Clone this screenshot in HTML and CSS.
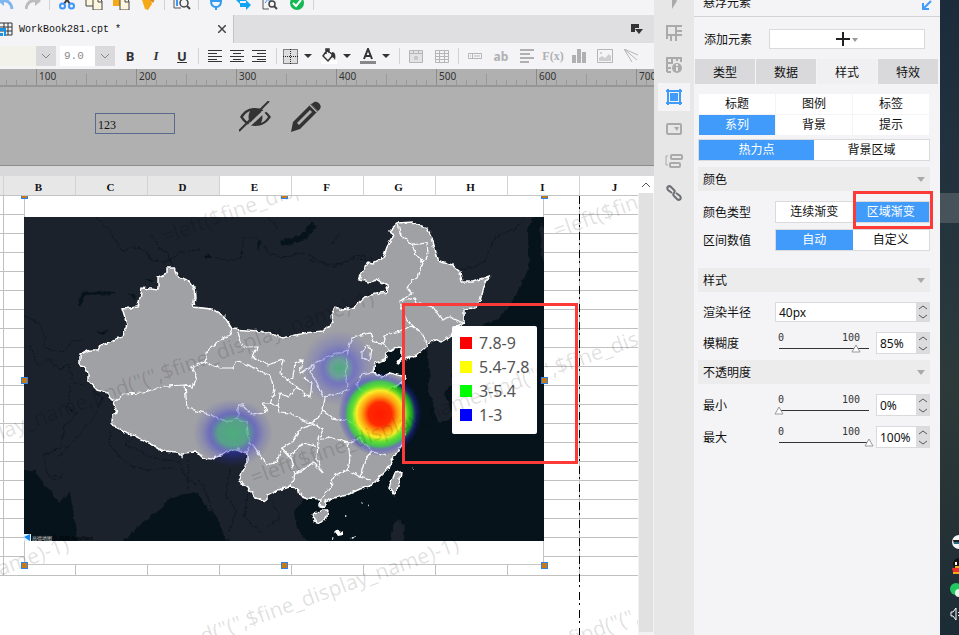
FILE: index.html
```html
<!DOCTYPE html>
<html lang="zh-CN">
<head>
  <meta charset="UTF-8" />
  <meta name="viewport" content="width=device-width, initial-scale=1.0"/>
  <title>WorkBook281.cpt</title>
  <link rel="stylesheet" href="styles.css">
</head>
<body>
  <div class="app">
    <main class="editor">
      <div class="toolbar">
        <button class="tool" aria-label="undo"><svg width="16" height="16"><path d="M14 15C13 8 9 6 4 7" fill="none" stroke="#7fb6f0" stroke-width="3"/><path d="M6 2v10L0 7z" fill="#7fb6f0"/></svg></button>
        <button class="tool" aria-label="redo"><svg width="16" height="16"><path d="M1 15C2 8 6 6 11 7" fill="none" stroke="#bcbcbf" stroke-width="3"/><path d="M10 2v10l6-5z" fill="#bcbcbf"/></svg></button>
        <span class="sep"></span>
        <button class="tool" aria-label="cut"><svg width="16" height="16"><path d="M4 0l7 10M12 0L5 10" stroke="#3a3a3c" stroke-width="2"/><g fill="none" stroke="#3d95f5" stroke-width="2"><circle cx="3.500" cy="12" r="2.500"/><circle cx="12.500" cy="12" r="2.500"/></g></svg></button>
        <button class="tool" aria-label="copy"><svg width="18" height="16"><path d="M1 0h9v12H1z" fill="#fdf6de" stroke="#444"/><path d="M8 4h6l3 3v9H8z" fill="#fdf6de" stroke="#444"/><path d="M13 4v4h4" fill="none" stroke="#444"/></svg></button>
        <button class="tool" aria-label="paste"><svg width="18" height="16"><path d="M1 0h11v12H1z" fill="#f5a916"/><path d="M8 4h6l3 3v9H8z" fill="#fdf6de" stroke="#444"/><path d="M13 4v4h4" fill="none" stroke="#444"/></svg></button>
        <button class="tool" aria-label="format painter"><svg width="16" height="16"><path d="M2 6l9 0 1 4-4 6-3-1z" fill="#f5a916"/><path d="M10 6l4-5 1 4-2 4z" fill="#d98b1c"/></svg></button>
        <span class="sep"></span>
        <button class="tool" aria-label="preview"><svg width="18" height="16"><path d="M8 14H1V0h12v5" fill="none" stroke="#555"/><path d="M4 3v9" stroke="#3d95f5" stroke-width="2"/><circle cx="11" cy="9" r="4" fill="#f4f4f7" stroke="#444" stroke-width="1.500"/><path d="M14 12l3 3" stroke="#444" stroke-width="2"/></svg></button>
        <span class="sep"></span>
        <button class="tool" aria-label="connect"><svg width="16" height="16"><path d="M2 7h12M3 7c0 4 2 6 5 6s5-2 5-6" fill="none" stroke="#2f9cf0" stroke-width="2"/><path d="M8 13v3" stroke="#2f9cf0" stroke-width="2"/></svg></button>
        <button class="tool" aria-label="switch"><svg width="16" height="16"><path d="M0 5l5-4v3h6v3H5v3zM16 11l-5-5v3H5v4h6v3z" fill="#12a5f4"/></svg></button>
        <button class="tool" aria-label="check template"><svg width="18" height="16"><path d="M8 15H2V0h12v6" fill="none" stroke="#555"/><path d="M4 9l3-4 2 3 3-6" fill="none" stroke="#3d95f5"/><circle cx="11" cy="10" r="3" fill="#f4f4f7" stroke="#444" stroke-width="1.500"/><path d="M13 12l3 3" stroke="#444" stroke-width="2"/></svg></button>
        <button class="tool" aria-label="done"><svg width="14" height="16"><circle cx="7" cy="9" r="7" fill="#12b954"/><path d="M3 9l3 3 5-6" fill="none" stroke="#fff" stroke-width="2"/></svg></button>
        <span class="sep"></span>
      </div>

      <div class="tabbar">
        <div class="file-tab">
          <svg width="13" height="14"><path d="M0 1h12v12H6M0 5h12M0 9h12M4 1v8M8 1v12" fill="none" stroke="#333"/><path d="M0 6h6v8H4V9H0zM0 11h3v3H0z" fill="#1a90e0"/></svg>
          <span class="file-name">WorkBook281.cpt *</span>
          <button class="close-btn" aria-label="close"><svg width="8" height="8"><path d="M0 0l8 8M8 0L0 8" stroke="#444" stroke-width="1.500"/></svg></button>
        </div>
        <button class="window-btn" aria-label="windows"><svg width="12" height="11"><path d="M0 0h8v4H4v4H0z" fill="#333"/><path d="M4 5h8l-4 5z" fill="#333"/></svg></button>
      </div>

      <div class="formatbar">
        <div class="combos">
          <select class="combo font-combo" aria-label="font"><option></option></select>
          <select class="combo size-combo" aria-label="font size"><option>9.0</option></select>
        </div>
        <button class="fmt bold">B</button>
        <button class="fmt italic">I</button>
        <button class="fmt underline">U</button>
        <span class="sep"></span>
        <div class="align-group">
          <button class="fmt narrow" aria-label="align left"><svg width="14" height="12"><path d="M0 .5h14M0 3.500h9M0 6.500h14M0 9.500h9M0 11.500h14" stroke="#333"/></svg></button>
          <button class="fmt narrow" aria-label="align center"><svg width="14" height="12"><path d="M0 .5h14M3 3.500h8M0 6.500h14M3 9.500h8M0 11.500h14" stroke="#333"/></svg></button>
          <button class="fmt narrow" aria-label="align right"><svg width="14" height="12"><path d="M0 .5h14M5 3.500h9M0 6.500h14M5 9.500h9M0 11.500h14" stroke="#333"/></svg></button>
        </div>
        <span class="sep"></span>
        <div class="drop-group">
          <button class="fmt drop" aria-label="borders"><svg width="15" height="15"><path fill="#ddd" d="M0 0h15v15H0z"/><path d="M.5 .5h14v14H.5zM7.500 0v15M0 7.500h15" fill="none" stroke="#222" stroke-dasharray="1 1"/></svg><i class="caret"></i></button>
          <button class="fmt drop" aria-label="fill colour"><svg width="16" height="16"><path fill="#fff" d="M0 12h16v4H0z"/><path d="M6 2l6 5-5 6-5-5zM5 6V1h3v4" fill="none" stroke="#333" stroke-width="1.500"/><path d="M11 4c3 0 4 3 3 8-1-2-2-3-4-3z" fill="#333"/></svg><i class="caret"></i></button>
          <button class="fmt drop" aria-label="text colour"><svg width="16" height="16"><path fill="#888" d="M0 13h16v3H0z"/><path d="M4 11L8 1l4 10M5 8h6" fill="none" stroke="#333" stroke-width="2"/></svg><i class="caret"></i></button>
        </div>
        <span class="sep"></span>
        <button class="fmt off" aria-label="merge"><svg width="14" height="13"><path d="M.5 .5h13v12H.5zM0 3.500h14M4.500 0v3M9.500 0v3" fill="#e3e3e5" stroke="#b5b5b7"/><path d="M5 6h4v4H5z" fill="#c8c8ca"/></svg></button>
        <button class="fmt off" aria-label="split"><svg width="14" height="13"><path d="M.5 .5h13v12H.5zM0 3.500h14M0 6.500h14M0 9.500h14M4.500 0v13M9.500 0v13" fill="none" stroke="#b5b5b7"/></svg></button>
        <span class="sep"></span>
        <button class="fmt off" aria-label="widget"><svg width="14" height="6"><path d="M.5 .5h13v5H.5zM4.500 0v6M6 3h6M2 3h1" fill="none" stroke="#b5b5b7"/></svg></button>
        <button class="fmt off">ab</button>
        <button class="fmt off" aria-label="rich text"><svg width="14" height="14"><path d="M0 1h14M0 5h10M0 9h14M0 13h9" stroke="#b0b0b2" stroke-width="2"/></svg></button>
        <button class="fmt off formula">F(x)</button>
        <button class="fmt off" aria-label="chart"><svg width="14" height="14"><path d="M0 6h4v8H0zM5 0h4v14H5zM10 3h4v11h-4z" fill="#b0b0b2"/></svg></button>
        <button class="fmt off" aria-label="image"><svg width="16" height="14"><path d="M.5 .5h15v13H.5z" fill="none" stroke="#b5b5b7"/><path d="M2 12V9l3-2 3 2 4-4 2 2v5z" fill="#cfcfd1"/><circle cx="4" cy="4" r="1" fill="#c5c5c7"/></svg></button>
        <button class="fmt off" aria-label="slope line"><svg width="14" height="14"><path d="M0 0l14 6M0 0l8 13M0 0l13 11" fill="none" stroke="#b5b5b7"/></svg></button>
      </div>

      <div class="ruler">
        <span>100</span><span>200</span><span>300</span><span>400</span><span>500</span><span>600</span><span>700</span>
      </div>

      <div class="param-pane">
        <input class="param-input" type="text" value="123" aria-label="parameter">
        <div class="param-actions">
          <svg width="33" height="31" viewBox="0 0 33 31"><path d="M1 16c4-7 9-9 15-9s12 3 16 9c-4 6-9 9-16 9S5 22 1 16z" fill="#333"/><path d="M4 16c2-3 4-5 7-6-2 4-2 8 0 12-3-1-5-3-7-6zM22 10c3 1 5 3 7 6-2 3-4 5-7 6 2-4 2-8 0-12z" fill="#b0b0b0"/><path d="M2 32L33 3" stroke="#b0b0b0" stroke-width="3"/><path d="M0 30L30 0" stroke="#333" stroke-width="2"/></svg>
          <svg width="30" height="31" viewBox="0 0 30 31"><path d="M2 21L20 3l7 7L9 28l-9 3z" fill="#333"/><path d="M6 22L19 9l2 2L8 24z" fill="#b0b0b0"/><path d="M19 4l7 7" stroke="#b0b0b0" stroke-width="1.500"/><path d="M22 2c3-4 10 2 7 6l-2 2-7-7z" fill="#333"/></svg>
        </div>
      </div>

      <div class="workspace">
        <div class="sheet">
          <div class="columns">
            <span class="first"></span><span>B</span><span>C</span><span>D</span><span class="on">E</span><span class="on">F</span><span class="on">G</span><span class="on">H</span><span class="on">I</span><span class="on">J</span>
          </div>
          <div class="canvas">
            <div class="grid"></div>
            <div class="page-edge"></div>
            <div class="float-chart">
              <svg class="map" viewBox="24 217 520 324">
                <defs>
                  <filter id="rough" x="-5%" y="-5%" width="110%" height="110%" color-interpolation-filters="sRGB">
                    <feTurbulence type="fractalNoise" baseFrequency="0.18" numOctaves="2" seed="4"/>
                    <feDisplacementMap in="SourceGraphic" scale="5" xChannelSelector="R" yChannelSelector="G"/>
                  </filter>
                  <radialGradient id="hot">
                    <stop offset="0" stop-color="#ff1a00"/>
                    <stop offset=".28" stop-color="#ff2a00"/>
                    <stop offset=".42" stop-color="#ff9a10"/>
                    <stop offset=".56" stop-color="#fff020" stop-opacity=".95"/>
                    <stop offset=".66" stop-color="#60e820" stop-opacity=".9"/>
                    <stop offset=".77" stop-color="#20d030" stop-opacity=".7"/>
                    <stop offset=".86" stop-color="#3038d0" stop-opacity=".4"/>
                    <stop offset="1" stop-color="#1010c0" stop-opacity="0"/>
                  </radialGradient>
                  <radialGradient id="cool">
                    <stop offset="0" stop-color="#38b070" stop-opacity=".8"/>
                    <stop offset=".22" stop-color="#48a090" stop-opacity=".6"/>
                    <stop offset=".42" stop-color="#4848d8" stop-opacity=".5"/>
                    <stop offset=".65" stop-color="#4848d8" stop-opacity=".25"/>
                    <stop offset="1" stop-color="#4848d8" stop-opacity="0"/>
                  </radialGradient>
                  <radialGradient id="warm">
                    <stop offset="0" stop-color="#38b070" stop-opacity=".8"/>
                    <stop offset=".38" stop-color="#38a080" stop-opacity=".7"/>
                    <stop offset=".58" stop-color="#3838d0" stop-opacity=".5"/>
                    <stop offset=".78" stop-color="#3838d0" stop-opacity=".2"/>
                    <stop offset="1" stop-color="#3838d0" stop-opacity="0"/>
                  </radialGradient>
                </defs>
                <rect x="24" y="217" width="520" height="324" fill="#1b222c"/>
                <g filter="url(#rough)">
                  <g fill="#06131a">
                    <path d="M20 470H34L45 485 60 503 70 492 73 510 78 545H20z"/>
                    <path d="M120 545L145 520 157 513 168 500 180 495 197 492 207 508 218 518 222 533 232 545z"/>
                    <path d="M365 375L384 350 404 344 410 358 427 349 430 372 428 392 435 402 443 395 452 384 452 350 470 332 500 318 516 296 529 268 528 230 535 212H550V545H310L297 528 294 512 305 498 345 480 390 440 378 400z"/>
                    <path d="M280 240l20-4 12-14 5 4-12 14-22 6zM78 300l5-8 16-1 16 1v2l-30 1-4 12zM96 332l13-2-6 5zM129 293l5 1 1 7zM204 256l5-2 2 3-5 2zM257 243l3-2-1 10zM142 276l12 5-3 1z"/>
                  </g>
                  <g fill="#1b222c">
                    <path d="M391 532l6-12 8 5-2 20H390zM432 400l12-6 9 18-3 8-12 2z"/>
                    <path d="M540 222l6 10v38l-5-18z"/>
                  </g>
                  <g fill="none" stroke="#0c141c" stroke-dasharray="2 1">
                    <path d="M96 217l14 15 12 19 14-4 12 6 4 8 14 1 14-9 20-4M150 235l6 5 2 8 10 4 4 12M216 258l12 3 14-4 1-20 13 1 14 16 14 4 20-6 22 12 16 0 14-9 20 4M455 270l18-3 12-6 10-24 20-8 12-14"/>
                    <path d="M24 315l14 8 8 16-3 8 20 6 9-12 12-2M30 345l8 20 12-6 8 10 10-4 6 18 14 3M70 385l-2 24 10 4-14 12-3 22-17 8 3 18 14 5M94 392l8 6-8 20-22 24-16 18M110 432l-1 14 22 20 18 4 24-2M133 437l-8 7 28 14 26 4 8 18 9 4M188 460v30M200 480l8 18 6 20 10 16M230 470l-4 25 10 16-6 20M248 493l-4 24 18 16M272 500l8 18-12 8M46 475l12 6 6-8"/>
                    <path d="M268 217l10 12M310 260l22 7 22-9 20 4M340 232l-8 12M425 497l14-12 20-32M400 510l-8 10"/>
                  </g>
                  <g fill="#a0a1a4" stroke="#fff" stroke-width="1.500">
                    <path d="M167 268L174 268 177 275 182 279 189 281 194 288 195 297 193 307 212 309 224 316 232 329 260 331 268 333 283 338 305 333 323 331 333 323 332 313 335 308 343 310 355 307 367 296 380 293 388 292 387 286 377 280 370 282 359 280 367 262 373 263 383 258 387 247 394 235 389 231 398 223 413 222 417 225 427 228 432 238 438 260 452 265 460 272 462 282 473 282 489 276 484 287 480 302 475 308 464 309 464 323 452 330 450 337 442 342 435 339 427 346 417 355 402 360 397 364 402 356 402 348 397 347 387 353 385 360 375 363 373 372 382 377 390 373 406 377 403 382 393 387 388 392 383 397 393 410 398 417 395 422 406 430 405 435 402 445 393 458 387 470 372 485 360 489 347 495 330 499 325 501 325 507 320 506 321 499 307 498 300 495 298 488 290 487 277 490 267 495 267 501 255 498 248 487 239 481 242 473 247 463 247 453 238 449 227 452 212 459 203 458 197 452 182 453 182 457 177 452 163 451 153 445 133 435 117 429 112 422 113 415 117 413 113 403 108 393 97 390 88 380 88 373 85 367 80 366 80 355 90 350 98 350 100 346 123 336 127 325 123 312 122 309 138 307 142 288 158 290 158 277 167 273z"/>
                    <path d="M313 515L320 510 328 510 327 517 320 523 314 521z"/>
                    <path d="M395 473L401 472 400 480 395 495 389 488z"/>
                  </g>
                  <g fill="none" stroke="#fff" stroke-width="1.200">
                    <path d="M232 329L228 337 220 340 208 349 205 362 192 367 197 377 193 387 185 385 165 386 143 393 123 394 113 403"/>
                    <path d="M185 385L187 408 212 415 227 422 238 418 238 405 243 405 253 415 267 412 262 403 270 403 275 390 270 377 253 367 237 361 233 368 220 368 205 362"/>
                    <path d="M237 330L243 347 257 347 253 357 267 365 283 360 280 373 287 380 297 387 290 397 280 394 278 406 270 403"/>
                    <path d="M238 418L247 423 249 443 247 452M249 443L253 445 267 465 277 462 282 448 290 457 303 443 318 447"/>
                    <path d="M287 380L293 377 295 363 302 360 300 374 313 365 327 357 348 350 352 337 370 333 374 342 383 343 385 335 400 332 412 325 405 317 400 302 415 298 417 303 433 307 442 320 450 317 463 323"/>
                    <path d="M412 325L423 335 427 346M383 343L390 352M348 350L347 362 345 375 348 390 343 392 325 397 323 410 333 418 353 422 360 430M315 363L310 372 317 383 323 397"/>
                    <path d="M398 223L400 233 412 245 417 257 423 262 418 277 407 287 412 293 400 302M412 245L427 243 428 253 423 262"/>
                    <path d="M362 353L367 345 372 350 370 360 362 357zM373 372L362 374 357 383 360 390 383 397M297 387L305 395 310 397 312 383 304 377M278 406L280 412 290 413 305 422 313 423 323 410"/>
                    <path d="M313 423L323 430 318 440 317 460 323 473M318 440L330 437 348 443 360 438 360 430M348 443L350 458 348 470 335 475 331 485 322 498M348 470L360 477 370 480"/>
                    <path d="M360 477L365 460 372 452 387 455M360 438L372 452M360 430L372 427 381 434 395 435M383 397L372 405 360 400 355 412 353 422M372 405L380 420 381 434M313 423L300 430 292 442 282 448M290 457L295 475 290 487M295 475L313 463 323 473"/>
                  </g>
                  <g fill="#fff">
                    <path d="M335 532l3-3 2 4 3-2v4l-5 1zM350 538l5-2-2 4zM361 502l2 1-1 1zM367 504l2 1-1 2zM346 515l2 1-2 1zM413 467l1 2-1 1zM331 536l3 2-2 1z"/>
                  </g>
                </g>
                <circle cx="339" cy="368" r="38" fill="url(#cool)"/>
                <ellipse cx="233" cy="433" rx="40" ry="34" fill="url(#warm)"/>
                <circle cx="380" cy="414" r="42" fill="url(#hot)"/>
                <path d="M24 534h7v7h-7z" fill="#dff2ff"/><path d="M24 537l6-3v7z" fill="#1588f0"/>
                <text class="map-credit light" x="32" y="540">高德地图</text>
                <text class="map-credit" x="53" y="540">© 2020 AutoNavi</text>
              </svg>
              <ul class="legend">
                <li><i class="red"></i>7.8-9</li>
                <li><i class="yellow"></i>5.4-7.8</li>
                <li><i class="green"></i>3-5.4</li>
                <li><i class="blue"></i>1-3</li>
              </ul>
            </div>
            <svg class="watermark" viewBox="0 196 638 439" preserveAspectRatio="xMinYMin slice">
              <text transform="translate(165 244) rotate(-20)">=left($fine_display_name,find("(",$fine_display_name)-1)</text>
              <text transform="translate(557 238) rotate(-20)">=left($fine_display_name,find("(",$fine_display_name)-1)</text>
              <text transform="translate(-140 491) rotate(-20)">=left($fine_display_name,find("(",$fine_display_name)-1)</text>
              <text transform="translate(254 485) rotate(-20)">=left($fine_display_name,find("(",$fine_display_name)-1)</text>
              <text transform="translate(-445 738) rotate(-20)">=left($fine_display_name,find("(",$fine_display_name)-1)</text>
              <text transform="translate(-55 738) rotate(-20)">=left($fine_display_name,find("(",$fine_display_name)-1)</text>
              <text transform="translate(337 732) rotate(-20)">=left($fine_display_name,find("(",$fine_display_name)-1)</text>
            </svg>
            <div class="mark mark-legend"></div>
            <div class="handles">
              <i></i><i></i><i></i>
              <i></i><i class="none"></i><i></i>
              <i></i><i></i><i></i>
            </div>
          </div>
        </div>
        <div class="scrollbar">
          <button class="scroll-up" aria-label="scroll up"><svg width="10" height="6"><path d="M1 5l4-4 4 4" fill="none" stroke="#555"/></svg></button>
          <div class="scroll-track"></div>
        </div>
      </div>
    </main>

    <nav class="rail">
      <button aria-label="collapse"><svg width="16" height="16"><path d="M6 0v16l5-8z" fill="#aaa"/></svg></button>
      <button aria-label="cell element"><svg width="16" height="16"><path d="M1 14V1h9v9H1M5 10v6M10 10v6M10 1h6M10 6h6M10 10h6M15 0v2M15 5v2M15 9v2" fill="none" stroke="#aaa" stroke-width="2"/></svg></button>
      <button aria-label="cell attribute"><svg width="16" height="16"><path d="M1 15V1h14v4M1 6h6M6 1v6M1 11h4M11 1v3M1 15h4" fill="none" stroke="#aaa" stroke-width="2"/><circle cx="11" cy="11" r="5" fill="#aaa"/><path d="M11 7v2M11 10v4" stroke="#e7e7e8" stroke-width="2"/></svg></button>
      <button class="active" aria-label="float element"><svg width="16" height="16"><path d="M2 0v16M14 0v16M0 2h16M0 14h16" stroke="#409bfb" stroke-width="2"/><path d="M4 4h8v8H4z" fill="#409bfb"/></svg></button>
      <button aria-label="widget settings"><svg width="16" height="12"><rect x="1" y="1" width="14" height="10" rx="1" fill="none" stroke="#aaa" stroke-width="2"/><path d="M8 4h5l-2 4z" fill="#aaa"/></svg></button>
      <button aria-label="condition attribute"><svg width="18" height="16"><path d="M3 3H1v9h2" fill="none" stroke="#aaa"/><rect x="6" y="2" width="11" height="4" rx="1" fill="none" stroke="#aaa" stroke-width="2"/><rect x="5" y="10" width="10" height="4" rx="1" fill="none" stroke="#aaa" stroke-width="2"/></svg></button>
      <button aria-label="hyperlink"><svg width="16" height="16" fill="none" stroke="#6d6f75" stroke-width="2"><path d="M6 8L2 5C0 2 3 0 5 2l3 3M8 5c1 1 1 2 0 3M10 8l4 3c2 3-1 5-3 3l-3-3M8 11c-1-1-1-2 0-3"/></svg></button>
    </nav>

    <aside class="panel">
      <header class="panel-title">
        <span>悬浮元素</span>
        <svg width="10" height="10"><path d="M9 1L2 8M1 3v6h6" fill="none" stroke="#409bfb" stroke-width="2"/></svg>
      </header>
      <div class="add-row">
        <span>添加元素</span>
        <button class="add-btn" aria-label="添加元素"><svg width="22" height="14"><path d="M7 0v14M0 7h14" stroke="#222" stroke-width="2"/><path d="M16 6h6l-3 4z" fill="#999"/></svg></button>
      </div>
      <div class="tabs">
        <button>类型</button><button>数据</button><button class="active">样式</button><button>特效</button>
      </div>
      <div class="panel-body">
        <div class="subtabs">
          <button>标题</button><button>图例</button><button>标签</button>
          <button class="active">系列</button><button>背景</button><button>提示</button>
        </div>
        <div class="segmented layer"><button class="active">热力点</button><button>背景区域</button></div>

        <button class="section">颜色<i></i></button>
        <div class="fields color-fields">
          <div class="field">
            <span class="name">颜色类型</span>
            <div class="segmented"><button>连续渐变</button><button class="active">区域渐变</button><div class="mark mark-type"></div></div>
          </div>
          <div class="field">
            <span class="name">区间数值</span>
            <div class="segmented"><button class="active">自动</button><button>自定义</button></div>
          </div>
        </div>

        <button class="section">样式<i></i></button>
        <div class="fields style-fields">
          <div class="field">
            <label class="name" for="radius">渲染半径</label>
            <div class="spinner wide"><input id="radius" type="text" value="40px"><span class="steps"><button aria-label="增加"><svg width="8" height="5"><path d="M0 4l4-3 4 3" fill="none" stroke="#555"/></svg></button><button aria-label="减少"><svg width="8" height="5"><path d="M0 1l4 3 4-3" fill="none" stroke="#555"/></svg></button></span></div>
          </div>
          <div class="field">
            <label class="name" for="blur">模糊度</label>
            <div class="slider"><div class="scale"><span>0</span><span>100</span></div><input id="blur" type="range" value="85"></div>
            <div class="spinner"><input type="text" value="85%" aria-label="模糊度"><span class="steps"><button aria-label="增加"><svg width="8" height="5"><path d="M0 4l4-3 4 3" fill="none" stroke="#555"/></svg></button><button aria-label="减少"><svg width="8" height="5"><path d="M0 1l4 3 4-3" fill="none" stroke="#555"/></svg></button></span></div>
          </div>
        </div>

        <button class="section">不透明度<i></i></button>
        <div class="fields opacity-fields">
          <div class="field">
            <label class="name" for="min">最小</label>
            <div class="slider"><div class="scale"><span>0</span><span>100</span></div><input id="min" type="range" value="0"></div>
            <div class="spinner"><input type="text" value="0%" aria-label="最小"><span class="steps"><button aria-label="增加"><svg width="8" height="5"><path d="M0 4l4-3 4 3" fill="none" stroke="#555"/></svg></button><button aria-label="减少"><svg width="8" height="5"><path d="M0 1l4 3 4-3" fill="none" stroke="#555"/></svg></button></span></div>
          </div>
          <div class="field">
            <label class="name" for="max">最大</label>
            <div class="slider"><div class="scale"><span>0</span><span>100</span></div><input id="max" type="range" value="100"></div>
            <div class="spinner"><input type="text" value="100%" aria-label="最大"><span class="steps"><button aria-label="增加"><svg width="8" height="5"><path d="M0 4l4-3 4 3" fill="none" stroke="#555"/></svg></button><button aria-label="减少"><svg width="8" height="5"><path d="M0 1l4 3 4-3" fill="none" stroke="#555"/></svg></button></span></div>
          </div>
        </div>
      </div>
    </aside>

    <div class="desktop">
      <div class="desktop-window"></div>
      <div class="tray">
        <svg width="9" height="16"><circle cx="9" cy="8" r="7" fill="#f4f6f8"/><path d="M3 6h6v4H4z" fill="#222"/><path d="M4 9h5" stroke="#28b8e8"/></svg>
        <svg width="9" height="16"><circle cx="9" cy="6" r="6" fill="#111"/><path d="M5 4h2v3H5z" fill="#fff"/><path d="M5 8h4v2H5z" fill="#f5a916"/><path d="M2 10h7v4H3z" fill="#e8322c"/><path d="M3 14h6v2H3z" fill="#f5a916"/></svg>
        <svg width="9" height="16"><circle cx="6" cy="7" r="6" fill="#20c860"/><circle cx="9" cy="11" r="4" fill="#e8f5ec"/></svg>
        <svg width="9" height="16"><path d="M1 6h2l3-4v12l-3-4H1zM8 6l1 1M8 10l1-1" fill="none" stroke="#fff"/></svg>
      </div>
    </div>
  </div>
</body>
</html>
```

FILE: styles.css
```css
* {
  box-sizing: border-box;
}

body {
  margin: 0;
  font-family: "Noto Sans", "Noto Sans CJK SC", sans-serif;
  font-size: 12px;
  color: #111;
  overflow: hidden;
}

button,
input,
select {
  margin: 0;
  padding: 0;
  border: none;
  border-radius: 0;
  background: none;
  font: inherit;
  color: inherit;
  outline: none;
}

svg {
  display: block;
  flex: none;
}

.app {
  display: flex;
  height: 100vh;
}

/* editor */
.editor {
  flex: 1;
  min-width: 0;
  display: flex;
  flex-direction: column;
  overflow: hidden;
  background: #f4f4f7;
}

.toolbar {
  flex: none;
  display: flex;
  align-items: flex-end;
  height: 15px;
  padding-bottom: 5px;
  margin-left: -8px;
}

.tool {
  flex: none;
  display: flex;
  justify-content: center;
  width: 27px;
}

.sep {
  flex: none;
  width: 1px;
  height: 16px;
  margin: 0 3px;
  background: #d3d3d6;
}

.tabbar {
  flex: none;
  display: flex;
  justify-content: space-between;
  align-items: center;
  height: 28px;
  padding-right: 11px;
  background: #dfdfe1;
}

.file-tab {
  display: flex;
  align-items: center;
  gap: 6px;
  width: 234px;
  height: 28px;
  padding-right: 7px;
  background: #f4f4f7;
  border-right: 1px solid #c4c4c6;
}

.file-name {
  flex: 1;
  font-family: "Liberation Mono", monospace;
  font-size: 10px;
}

.formatbar {
  flex: none;
  display: flex;
  align-items: center;
  height: 26px;
}

.combos {
  display: flex;
  gap: 4px;
  margin-right: 2px;
}

.combo {
  appearance: none;
  height: 20px;
  font-family: "Liberation Mono", monospace;
  font-size: 11px;
  color: #8a8a8c;
  background: url("data:image/svg+xml,%3Csvg xmlns='http://www.w3.org/2000/svg' width='20' height='20'%3E%3Cpath fill='%23dadadc' d='M0 0h20v20H0z'/%3E%3Cpath d='M6 8l4 4 4-4' fill='none' stroke='%23888'/%3E%3C/svg%3E") right center no-repeat #fff;
}

.font-combo {
  width: 56px;
  background-color: #f2f2ea;
}

.size-combo {
  width: 55px;
  padding-left: 4px;
}

.fmt {
  display: flex;
  align-items: center;
  justify-content: center;
  flex: none;
  width: 26px;
  height: 22px;
}

.bold,
.italic,
.underline {
  font-size: 13px;
  font-weight: bold;
  color: #333;
}

.italic {
  font-family: "Liberation Serif", serif;
  font-style: italic;
}

.underline {
  text-decoration: underline;
}

.align-group {
  display: flex;
  margin: 0 3px 0 2px;
}

.narrow {
  width: 22px;
}

.drop-group {
  display: flex;
  gap: 5px;
  margin-right: 4px;
}

.drop {
  width: 34px;
  gap: 6px;
}

.caret {
  border: 4px solid transparent;
  border-top: 4px solid #333;
  border-bottom: none;
}

.off {
  color: #b0b0b2;
  font-weight: bold;
}

.formula {
  font-family: "Liberation Serif", serif;
}

.ruler {
  flex: none;
  display: flex;
  height: 18px;
  padding-left: 39px;
  overflow: hidden;
  border-bottom: 2px solid #969696;
  color: #333;
  font-size: 10px;
  line-height: 15px;
  background:
    repeating-linear-gradient(90deg, #8c8c8c 0 1px, transparent 1px 100px) 36px 0 / 100% 16px no-repeat,
    repeating-linear-gradient(90deg, #999 0 1px, transparent 1px 50px) -14px 5px / 110% 11px no-repeat,
    repeating-linear-gradient(90deg, #999 0 1px, transparent 1px 10px) -4px 11px / 110% 5px no-repeat,
    #b0b0b0;
}

.ruler span {
  flex: none;
  width: 100px;
}

.param-pane {
  flex: none;
  display: flex;
  gap: 64px;
  height: 79px;
  padding: 14px 0 0 95px;
  background: #b0b0b0;
  border-bottom: 1px solid #8c8c8c;
}

.param-input {
  width: 80px;
  height: 21px;
  margin-top: 12px;
  padding: 3px 2px 0;
  border: 1px solid #5b6a8c;
  font-family: "Liberation Serif", serif;
}

.param-actions {
  display: flex;
  gap: 19px;
}

.workspace {
  flex: 1;
  min-height: 0;
  display: flex;
  border-top: 10px solid #d9d9db;
}

.sheet {
  flex: 1;
  min-width: 0;
  display: flex;
  flex-direction: column;
  background: #fff;
}

.columns {
  flex: none;
  display: flex;
  height: 20px;
  overflow: hidden;
  border-bottom: 1px solid #c4c4c4;
  font-family: "Liberation Serif", serif;
  font-size: 11px;
  font-weight: bold;
  line-height: 22px;
  text-align: center;
}

.columns span {
  flex: none;
  width: 72px;
  padding-right: 2px;
  background: #e7e7e8;
  border-right: 1px solid #d3d3d5;
}

.columns .first {
  width: 4px;
}

.columns .on {
  background: #fff;
}

.canvas {
  position: relative;
  flex: 1;
  overflow: hidden;
}

.grid {
  height: 380px;
  background:
    linear-gradient(#c0c0c0, #c0c0c0) 3px 0 / 1px 100% no-repeat,
    repeating-linear-gradient(90deg, #c0c0c0 0 1px, transparent 1px 72px) 75px 0 / 505px 100% no-repeat,
    repeating-linear-gradient(transparent 0 18px, #c0c0c0 18px 19px);
}

.page-edge {
  position: absolute;
  left: 579px;
  top: 0;
  bottom: 0;
  width: 1px;
  background: repeating-linear-gradient(#000 0 8px, transparent 8px 11px, #000 11px 13px, transparent 13px 18px);
}

/* chart floating over the cells */
.float-chart {
  position: absolute;
  left: 24px;
  top: 0;
  width: 520px;
  height: 369px;
  padding-top: 21px;
  background: #fff;
  border-bottom: 1px solid #c4c4c4;
  box-shadow: inset 1px 0 #c4c4c4, inset -1px 0 #c4c4c4;
}

.map {
  width: 520px;
  height: 324px;
}

.map-credit {
  font-size: 5px;
  fill: #000;
}

.light {
  fill: #ccc;
}

.legend {
  position: absolute;
  left: 428px;
  top: 130px;
  width: 85px;
  margin: 0;
  padding: 5px 0 7px 8px;
  list-style: none;
  background: #fff;
  border-radius: 2px;
  font-size: 16px;
  line-height: 24px;
  white-space: nowrap;
  color: #555;
}

.legend li {
  display: flex;
  align-items: center;
  gap: 7px;
}

.legend i {
  width: 12px;
  height: 12px;
}

.red {
  background: #f00;
}

.yellow {
  background: #ff0;
}

.green {
  background: #0f0;
}

.blue {
  background: #00f;
}

.watermark {
  position: absolute;
  left: 0;
  top: 0;
  width: 638px;
  height: 439px;
  font-size: 21px;
  fill: rgba(0, 0, 0, 0.12);
}

.mark {
  position: absolute;
  border: 3px solid #fc3a38;
  pointer-events: none;
}

.mark-legend {
  left: 402px;
  top: 107px;
  width: 176px;
  height: 161px;
}

.handles {
  position: absolute;
  left: 21px;
  top: -4px;
  width: 527px;
  height: 377px;
  display: grid;
  grid-template-columns: repeat(3, 7px);
  justify-content: space-between;
  align-content: space-between;
}

.handles i {
  height: 7px;
  background: #c87a10;
  border: 1px solid #2f80e8;
}

.handles .none {
  visibility: hidden;
}

.scrollbar {
  flex: none;
  display: flex;
  flex-direction: column;
  width: 16px;
  padding-bottom: 3px;
  background: #f2f2f3;
}

.scroll-up {
  display: flex;
  align-items: center;
  justify-content: center;
  height: 17px;
  background: #fff;
}

.scroll-track {
  flex: 1;
  margin: 0 1px;
  background: #e1e1e1;
}

/* icon rail */
.rail {
  flex: none;
  display: flex;
  flex-direction: column;
  align-items: center;
  gap: 4px;
  width: 40px;
  margin-top: -13px;
  background: #e7e7e8;
}

.rail button {
  flex: none;
  display: flex;
  align-items: center;
  justify-content: center;
  width: 32px;
  height: 28px;
}

.rail .active {
  background: #f4f4f7;
}

/* properties panel */
.panel {
  flex: none;
  width: 246px;
  overflow: hidden;
  background: #f4f4f7;
}

.panel-title {
  display: flex;
  justify-content: space-between;
  align-items: flex-end;
  height: 17px;
  padding: 0 8px 6px 9px;
  line-height: 14px;
  border-bottom: 1px solid #d3d3d6;
}

.add-row {
  display: flex;
  align-items: center;
  gap: 17px;
  padding: 12px 15px 10px 10px;
}

.add-btn {
  flex: 1;
  display: flex;
  align-items: center;
  justify-content: center;
  height: 20px;
  background: #fff;
  border: 1px solid #dadadc;
}

.tabs {
  display: flex;
  gap: 1px;
  padding: 0 2px 0 1px;
}

.tabs button {
  flex: 1;
  height: 25px;
  background: #d9d9dc;
}

.tabs .active {
  background: #f0f0f2;
}

.panel-body {
  padding: 10px 10px 0 4px;
}

.subtabs {
  display: grid;
  grid-template-columns: repeat(3, 1fr);
  gap: 1px;
  padding: 0 1px;
  margin-bottom: 4px;
}

.subtabs button {
  height: 20px;
  line-height: 20px;
  background: #fff;
}

.segmented {
  position: relative;
  flex: 1;
  display: flex;
  height: 22px;
  border: 1px solid #dadadc;
  background: #fff;
}

.segmented button {
  flex: 1;
  line-height: 20px;
}

.subtabs .active,
.segmented .active {
  background: #409bfb;
  color: #fff;
}

.layer {
  margin-bottom: 6px;
}

.mark-type {
  left: 77px;
  right: -4px;
  top: -11px;
  height: 38px;
}

.section {
  display: flex;
  justify-content: space-between;
  align-items: center;
  width: 100%;
  height: 24px;
  padding: 0 5px;
  background: #ececed;
}

.section i {
  border: 4px solid transparent;
  border-top: 5px solid #aaa;
  border-bottom: none;
}

.fields {
  display: flex;
  flex-direction: column;
}

.color-fields {
  gap: 6px;
  padding: 10px 0 17px;
}

.style-fields {
  gap: 9px;
  padding: 9px 0 6px;
}

.opacity-fields {
  gap: 10px;
  padding: 10px 0;
}

.field {
  display: flex;
  align-items: center;
  height: 22px;
}

.name {
  width: 77px;
  padding-left: 5px;
}

.spinner {
  display: flex;
  width: 54px;
  height: 22px;
  background: #fff;
  border: 1px solid #dadadc;
}

.wide {
  flex: 1;
  height: 20px;
}

.spinner input {
  flex: 1;
  min-width: 0;
  padding-left: 3px;
}

.steps {
  display: flex;
  flex-direction: column;
  width: 13px;
  background: #dcdcde;
}

.steps button {
  flex: 1;
  display: flex;
  align-items: center;
  justify-content: center;
}

.slider {
  flex: 1;
  height: 22px;
  margin-right: 2px;
  margin-left: -1px;
}

.scale {
  display: flex;
  justify-content: space-between;
  padding: 0 14px 0 4px;
  font-family: "DejaVu Sans Mono", monospace;
  font-size: 10px;
  line-height: 12px;
  color: #333;
}

.slider input {
  appearance: none;
  display: block;
  width: 100%;
  height: 10px;
  background: linear-gradient(#333, #333) 5px 4px / calc(100% - 10px) 1px no-repeat;
}

.slider input::-webkit-slider-thumb {
  appearance: none;
  width: 10px;
  height: 10px;
  background: url("data:image/svg+xml,%3Csvg xmlns='http://www.w3.org/2000/svg' width='10' height='10'%3E%3Cpath d='M5 1l4 7H1z' fill='%23fff' stroke='%23999'/%3E%3C/svg%3E");
}

/* strip of desktop behind the window */
.desktop {
  flex: none;
  display: flex;
  flex-direction: column;
  justify-content: space-between;
  align-items: flex-end;
  width: 19px;
  padding: 193px 0 13px;
  background: linear-gradient(#1c2b3b, #24343e 35%, #2c3a3a 60%, #283536 75%, #1c2c36);
}

.desktop-window {
  width: 100%;
  height: 30px;
  background: #47535b;
}

.tray {
  display: flex;
  flex-direction: column;
  gap: 8px;
}
```
